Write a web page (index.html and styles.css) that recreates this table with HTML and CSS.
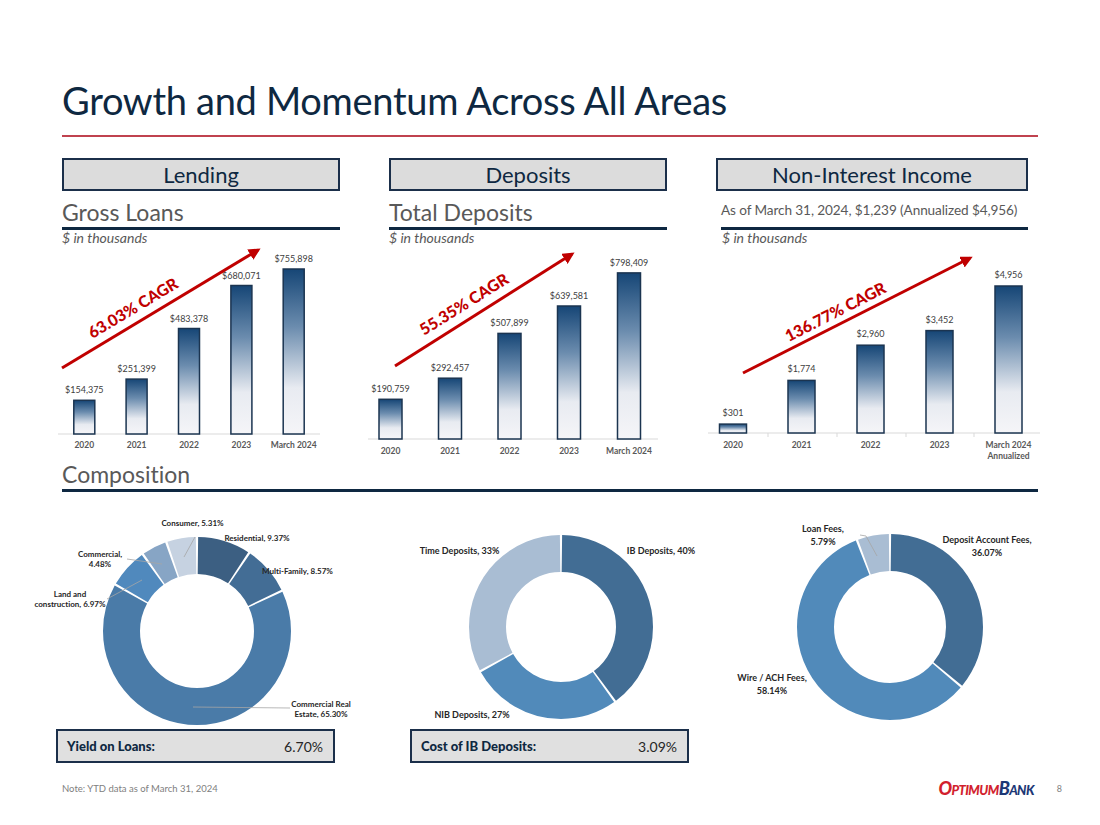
FILE: index.html
```html
<!DOCTYPE html>
<html>
<head>
<meta charset="utf-8">
<title>Growth and Momentum Across All Areas</title>
<link rel="stylesheet" href="styles.css">
</head>
<body>
<div class="slide">
  <h1 class="title">Growth and Momentum Across All Areas</h1>

  <div class="cols">
    <section class="col">
      <div class="tab">Lending</div>
      <div class="subhead">Gross Loans</div>
      <div class="units">$ in thousands</div>
      <svg class="chart" width="278" height="213" viewBox="0 0 278 213">
        <defs>
          <linearGradient id="barGrad" x1="0" y1="0" x2="0" y2="1">
            <stop offset="0" stop-color="#164676"/>
            <stop offset="0.35" stop-color="#6b8cae"/>
            <stop offset="0.72" stop-color="#e8ebf1"/>
            <stop offset="1" stop-color="#f5f5f8"/>
          </linearGradient>
          <marker id="ah" markerWidth="4" markerHeight="4" refX="3" refY="2" orient="auto" markerUnits="strokeWidth">
            <path d="M0,0 L4,2 L0,4 z" fill="#c00000"/>
          </marker>
        </defs>
        <line class="axis" x1="-4" y1="188" x2="258" y2="188"/>
        <rect class="bar" x="11.8" y="154.3" width="21" height="33.7"/>
        <rect class="bar" x="64.1" y="133.1" width="21" height="54.9"/>
        <rect class="bar" x="116.5" y="82.5" width="21" height="105.5"/>
        <rect class="bar" x="168.9" y="39.5" width="21" height="148.5"/>
        <rect class="bar" x="221.2" y="23" width="21" height="165"/>
        <text class="val" x="22.3" y="147.3">$154,375</text>
        <text class="val" x="74.6" y="126.1">$251,399</text>
        <text class="val" x="127" y="75.5">$483,378</text>
        <text class="val" x="179.4" y="32.5">$680,071</text>
        <text class="val" x="231.7" y="16">$755,898</text>
        <text class="yr" x="22.3" y="202">2020</text>
        <text class="yr" x="74.6" y="202">2021</text>
        <text class="yr" x="127" y="202">2022</text>
        <text class="yr" x="179.4" y="202">2023</text>
        <text class="yr" x="231.7" y="202">March 2024</text>
        <line class="arrow" x1="0" y1="122" x2="196" y2="4" marker-end="url(#ah)"/>
        <text class="cagr" transform="translate(74 67) rotate(-31)">63.03% CAGR</text>
      </svg>
    </section>

    <section class="col">
      <div class="tab">Deposits</div>
      <div class="subhead">Total Deposits</div>
      <div class="units">$ in thousands</div>
      <svg class="chart" width="278" height="213" viewBox="0 0 278 213">
        <line class="axis" x1="-21" y1="193" x2="269" y2="193"/>
        <rect class="bar" x="-10" y="153.3" width="23" height="39.7"/>
        <rect class="bar" x="49.5" y="132.2" width="23" height="60.8"/>
        <rect class="bar" x="109" y="87.4" width="23" height="105.6"/>
        <rect class="bar" x="168.5" y="60" width="23" height="133"/>
        <rect class="bar" x="228.5" y="26.9" width="23" height="166.1"/>
        <text class="val" x="1.5" y="146.3">$190,759</text>
        <text class="val" x="61" y="125.2">$292,457</text>
        <text class="val" x="120.5" y="80.4">$507,899</text>
        <text class="val" x="180" y="53">$639,581</text>
        <text class="val" x="240" y="19.9">$798,409</text>
        <text class="yr" x="1.5" y="208">2020</text>
        <text class="yr" x="61" y="208">2021</text>
        <text class="yr" x="120.5" y="208">2022</text>
        <text class="yr" x="180" y="208">2023</text>
        <text class="yr" x="240" y="208">March 2024</text>
        <line class="arrow" x1="6" y1="120" x2="183" y2="8" marker-end="url(#ah)"/>
        <text class="cagr" transform="translate(78 63) rotate(-32)">55.35% CAGR</text>
      </svg>
    </section>

    <section class="col wide">
      <div class="tab">Non-Interest Income</div>
      <div class="subhead small">As of March 31, 2024, $1,239 (Annualized $4,956)</div>
      <div class="units ind">$ in thousands</div>
      <svg class="chart" width="312" height="213" viewBox="0 0 312 213">
        <line class="axis" x1="-8" y1="187" x2="324" y2="187"/>
        <line class="axis" x1="52" y1="187" x2="52" y2="191"/>
        <line class="axis" x1="121" y1="187" x2="121" y2="191"/>
        <line class="axis" x1="190" y1="187" x2="190" y2="191"/>
        <line class="axis" x1="258" y1="187" x2="258" y2="191"/>
        <rect class="bar" x="3.5" y="178.1" width="27" height="8.9"/>
        <rect class="bar" x="72" y="134.4" width="27" height="52.6"/>
        <rect class="bar" x="141" y="99.2" width="27" height="87.8"/>
        <rect class="bar" x="210" y="84.6" width="27" height="102.4"/>
        <rect class="bar" x="279" y="40" width="27" height="147"/>
        <text class="val" x="17" y="170">$301</text>
        <text class="val" x="85.5" y="126.4">$1,774</text>
        <text class="val" x="154.5" y="91.2">$2,960</text>
        <text class="val" x="223.5" y="76.6">$3,452</text>
        <text class="val" x="292.5" y="32">$4,956</text>
        <text class="yr" x="17" y="202">2020</text>
        <text class="yr" x="85.5" y="202">2021</text>
        <text class="yr" x="154.5" y="202">2022</text>
        <text class="yr" x="223.5" y="202">2023</text>
        <text class="yr" x="292.5" y="202">March 2024</text>
        <text class="yr" x="292.5" y="213">Annualized</text>
        <line class="arrow" x1="27" y1="127" x2="254" y2="12" marker-end="url(#ah)"/>
        <text class="cagr" transform="translate(122 71) rotate(-27)">136.77% CAGR</text>
      </svg>
    </section>
  </div>

  <div class="comp-head">Composition</div>

  <div class="donuts">
    <div class="dcell">
      <svg class="donut" viewBox="0 0 278 237">
        <g transform="rotate(-90 135 139)">
          <circle cx="135" cy="139" r="75.5" pathLength="100" class="seg" stroke="#3c5f82" stroke-dasharray="8.97 100" stroke-dashoffset="-0.2"/>
          <circle cx="135" cy="139" r="75.5" pathLength="100" class="seg" stroke="#436d95" stroke-dasharray="8.17 100" stroke-dashoffset="-9.57"/>
          <circle cx="135" cy="139" r="75.5" pathLength="100" class="seg" stroke="#4a7ba8" stroke-dasharray="64.9 100" stroke-dashoffset="-18.14"/>
          <circle cx="135" cy="139" r="75.5" pathLength="100" class="seg" stroke="#5089bd" stroke-dasharray="6.57 100" stroke-dashoffset="-83.44"/>
          <circle cx="135" cy="139" r="75.5" pathLength="100" class="seg" stroke="#87a5c5" stroke-dasharray="4.08 100" stroke-dashoffset="-90.41"/>
          <circle cx="135" cy="139" r="75.5" pathLength="100" class="seg" stroke="#c6d2e1" stroke-dasharray="4.91 100" stroke-dashoffset="-94.89"/>
        </g>
        <polyline class="lead" points="133,45 122,65"/>
        <polyline class="lead" points="65,67 100,72"/>
        <polyline class="lead" points="45,107 80,88"/>
        <polyline class="lead" points="131,215 228,216"/>
        <text class="dl" x="130.5" y="34">Consumer, 5.31%</text>
        <text class="dl" x="195" y="49">Residential, 9.37%</text>
        <text class="dl" x="235.5" y="82">Multi-Family, 8.57%</text>
        <text class="dl" x="38" y="65">Commercial,</text>
        <text class="dl" x="38" y="75">4.48%</text>
        <text class="dl" x="8" y="105">Land and</text>
        <text class="dl" x="8" y="115">construction, 6.97%</text>
        <text class="dl" x="259" y="215">Commercial Real</text>
        <text class="dl" x="259" y="225">Estate, 65.30%</text>
      </svg>
      <div class="kpi kpi1"><b>Yield on Loans:</b><span>6.70%</span></div>
    </div>

    <div class="dcell">
      <svg class="donut" viewBox="0 0 278 237">
        <g transform="rotate(-90 172 135)">
          <circle cx="172" cy="135" r="73.5" pathLength="100" class="seg" stroke="#426d94" stroke-dasharray="39.6 100" stroke-dashoffset="-0.2"/>
          <circle cx="172" cy="135" r="73.5" pathLength="100" class="seg" stroke="#518aba" stroke-dasharray="26.6 100" stroke-dashoffset="-40.2"/>
          <circle cx="172" cy="135" r="73.5" pathLength="100" class="seg" stroke="#a9bdd3" stroke-dasharray="32.6 100" stroke-dashoffset="-67.2"/>
        </g>
        <text class="dl lg" x="70.5" y="62">Time Deposits, 33%</text>
        <text class="dl lg" x="272" y="62">IB Deposits, 40%</text>
        <text class="dl lg" x="83" y="226">NIB Deposits, 27%</text>
      </svg>
      <div class="kpi kpi2"><b>Cost of IB Deposits:</b><span>3.09%</span></div>
    </div>

    <div class="dcell wide">
      <svg class="donut" viewBox="0 0 312 237">
        <g transform="rotate(-90 174 135)">
          <circle cx="174" cy="135" r="74.5" pathLength="100" class="seg" stroke="#426d94" stroke-dasharray="35.67 100" stroke-dashoffset="-0.2"/>
          <circle cx="174" cy="135" r="74.5" pathLength="100" class="seg" stroke="#518aba" stroke-dasharray="57.74 100" stroke-dashoffset="-36.27"/>
          <circle cx="174" cy="135" r="74.5" pathLength="100" class="seg" stroke="#a9bdd3" stroke-dasharray="5.39 100" stroke-dashoffset="-94.41"/>
        </g>
        <polyline class="lead" points="144,43 150,44 161,64"/>
        <text class="dl lg" x="107" y="40">Loan Fees,</text>
        <text class="dl lg" x="107" y="53">5.79%</text>
        <text class="dl lg" x="271" y="51">Deposit Account Fees,</text>
        <text class="dl lg" x="271" y="64">36.07%</text>
        <text class="dl lg" x="56" y="189">Wire / ACH Fees,</text>
        <text class="dl lg" x="56" y="202">58.14%</text>
      </svg>
    </div>
  </div>

  <div class="foot">
    <span class="note">Note: YTD data as of March 31, 2024</span>
    <span class="logo"><span class="r">Optimum</span><span class="b">Bank</span></span>
    <span class="pg">8</span>
  </div>
</div>
</body>
</html>
```

FILE: styles.css
```css
* { box-sizing: border-box; }
html, body { margin: 0; background: #ffffff; }
body {
  font-family: Lato, "Open Sans", sans-serif;
  color: #404040;
  font-variant-ligatures: no-common-ligatures;
  font-feature-settings: "liga" 0, "dlig" 0;
}

.slide {
  width: 1100px;
  height: 825px;
  padding: 0 62px;
  overflow: hidden;
}

.title {
  margin: 0;
  padding: 78px 0 13px;
  font-size: 38px;
  line-height: 44px;
  font-weight: 400;
  color: #0e2841;
  letter-spacing: -0.3px;
  border-bottom: 2px solid #c0424f;
}

.cols { display: flex; gap: 49px; margin-top: 21px; }
.col { width: 278px; flex: none; }
.col.wide { width: 312px; }

.tab {
  height: 33px;
  border: 2px solid #1b2f4a;
  background: #dcdcdc;
  text-align: center;
  font-size: 22px;
  line-height: 29px;
  color: #0e2841;
}

.subhead {
  margin-top: 6px;
  font-size: 23px;
  line-height: 30px;
  color: #595959;
  border-bottom: 3px solid #0e2841;
}
.subhead.small {
  margin-left: 5px;
  font-size: 13.6px;
  line-height: 20px;
  padding: 3px 0 7px;
  white-space: nowrap;
  letter-spacing: -0.1px;
}

.units {
  font-style: italic;
  font-size: 14px;
  line-height: 16px;
  color: #595959;
}
.units.ind { margin-left: 6px; }

.chart { display: block; overflow: visible; }

.axis { stroke: #d9d9d9; stroke-width: 1; }
.bar { fill: url(#barGrad); stroke: #1b3450; stroke-width: 1.5; }
.val { font-family: Lato, sans-serif; font-size: 9px; fill: #404040; text-anchor: middle; }
.yr { font-family: Lato, sans-serif; font-size: 8.5px; font-weight: 700; fill: #595959; text-anchor: middle; }
.arrow { stroke: #c00000; stroke-width: 3; }
.cagr { font-family: Lato, sans-serif; font-size: 16px; font-weight: 900; fill: #c00000; text-anchor: middle; }

.comp-head {
  font-size: 23px;
  line-height: 30px;
  color: #595959;
  border-bottom: 3px solid #0e2841;
}

.donuts { display: flex; gap: 49px; }
.dcell { width: 278px; flex: none; }
.dcell.wide { width: 312px; }
.donut { display: block; overflow: visible; width: 100%; height: 237px; }

.seg { fill: none; stroke-width: 37; }
.lead { fill: none; stroke: #a6a6a6; stroke-width: 0.8; }
.dl { font-family: Lato, sans-serif; font-size: 8px; font-weight: 700; fill: #262626; text-anchor: middle; }
.dl.lg { font-size: 9px; }

.kpi {
  display: flex;
  justify-content: space-between;
  align-items: center;
  width: 279px;
  height: 34px;
  border: 2px solid #1b2f4a;
  background: #e0e0e0;
  padding: 0 10px 0 9px;
}
.kpi1 { margin-left: -6px; }
.kpi2 { margin-left: 21px; }
.kpi b { font-weight: 900; color: #0e2841; font-size: 13px; }
.kpi span { font-size: 14px; color: #262626; }

.foot {
  display: flex;
  align-items: center;
  margin-top: 18px;
  height: 14px;
}
.note { font-size: 9.5px; color: #808080; }
.logo {
  margin-left: auto;
  margin-right: 3px;
  font-style: italic;
  font-weight: 900;
  font-variant: small-caps;
  font-size: 18px;
  letter-spacing: -0.6px;
  line-height: 14px;
}
.logo .r { color: #d21f2e; }
.logo .b { color: #1d3876; }
.pg { margin-left: 20px; margin-right: -24px; font-size: 9px; color: #808080; }
```
